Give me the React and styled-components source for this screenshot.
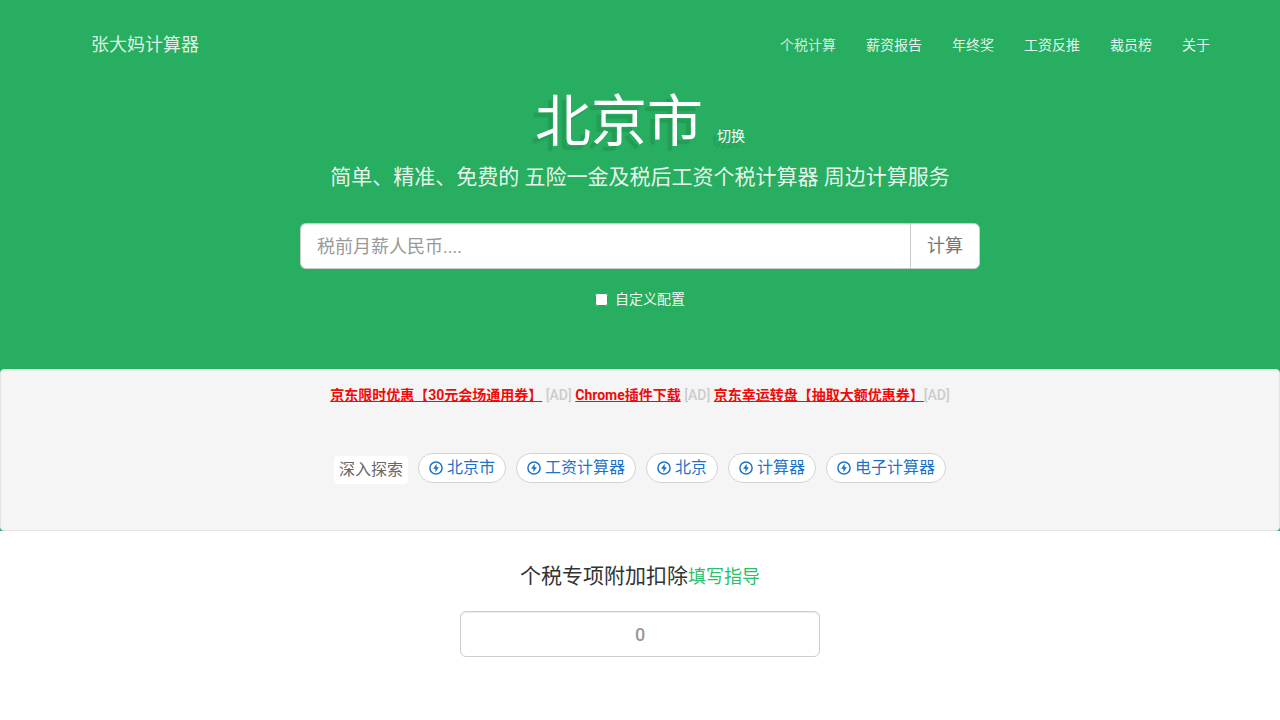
import React, { useState } from 'react';
import styled, { createGlobalStyle, css } from 'styled-components';

const GlobalStyle = createGlobalStyle`
  *, *::before, *::after {
    box-sizing: border-box;
  }

  body {
    margin: 0;
    background: #fff;
    color: #333;
    font-family: Roboto, 'Noto Sans CJK SC', sans-serif;
    font-size: 14px;
    font-weight: 400;
    line-height: 20px;
  }

  a {
    text-decoration: none;
  }

  input, button {
    font-family: inherit;
  }
`;

const Green = styled.div`
  background: #27ae60;
`;

const Nav = styled.nav`
  display: flex;
  align-items: center;
  justify-content: space-between;
  max-width: 1170px;
  height: 90px;
  margin: 0 auto;
  padding: 0 15px 0 36px;
`;

const Brand = styled.a`
  color: rgba(255, 255, 255, 0.85);
  font-size: 18px;
`;

const Menu = styled.ul`
  display: flex;
  gap: 30px;
  margin: 0;
  padding: 0;
  list-style: none;
`;

const MenuLink = styled.a`
  color: ${props => (props.$active ? 'rgba(255, 255, 255, 0.8)' : 'rgba(255, 255, 255, 0.9)')};
`;

const Hero = styled.header`
  display: flex;
  flex-direction: column;
  align-items: center;
  padding-bottom: 60px;
  color: #fff;
`;

const City = styled.h1`
  margin: 0;
  font-size: 56px;
  font-weight: 400;
  line-height: 64px;
  text-shadow: -5px 5px 1px rgba(0, 0, 0, 0.1);
`;

const Switch = styled.a`
  color: #fff;
  font-size: 14px;
  line-height: 20px;
`;

const Lead = styled.p`
  margin: 8px 0 30px;
  color: rgba(255, 255, 255, 0.9);
  font-size: 21px;
  line-height: 31px;
`;

const Form = styled.form`
  display: flex;
  flex-direction: column;
  align-items: center;
  gap: 20px;
  width: 100%;
  max-width: 680px;
`;

const InputGroup = styled.div`
  display: flex;
  width: 100%;
`;

const fieldCss = css`
  height: 46px;
  padding: 0 16px;
  border: 1px solid #ccc;
  background: #fff;
  font-size: 18px;
  line-height: 24px;
`;

const Field = styled.input`
  ${fieldCss}
  flex: 1;
  min-width: 0;
  border-right: 0;
  border-radius: 6px 0 0 6px;
  box-shadow: inset 0 1px 1px rgba(0, 0, 0, 0.075);
  color: #555;

  &::placeholder {
    color: #999;
  }
`;

const Submit = styled.button`
  ${fieldCss}
  border-radius: 0 6px 6px 0;
  color: #777;
  cursor: pointer;
`;

const Custom = styled.label`
  display: flex;
  align-items: center;
  gap: 7px;
  color: rgba(255, 255, 255, 0.95);
`;

const Check = styled.input`
  width: 13px;
  height: 13px;
  margin: 0;
`;

const Well = styled.section`
  display: flex;
  flex-direction: column;
  align-items: center;
  gap: 48px;
  min-height: 162px;
  padding: 15px;
  border: 1px solid #e3e3e3;
  border-radius: 4px;
  background: #f5f5f5;
  box-shadow: inset 0 1px 1px rgba(0, 0, 0, 0.05);
`;

const Ads = styled.p`
  margin: 0;
  color: #ccc;
  font-weight: 500;
`;

const AdLink = styled.a`
  color: #f00a0a;
  font-weight: 700;
  text-decoration: underline;
`;

const Tags = styled.div`
  display: flex;
  flex-wrap: wrap;
  align-items: flex-start;
  justify-content: center;
  gap: 10px;
  font-size: 16px;
`;

const TagsTitle = styled.span`
  margin-top: 3px;
  padding: 0 5px;
  border-radius: 4px;
  background: #fff;
  color: #666;
  line-height: 28px;
`;

const Tag = styled.a`
  display: flex;
  align-items: center;
  gap: 4px;
  height: 30px;
  padding: 0 10px;
  border: 1px solid #d3d3d3;
  border-radius: 15px;
  background: #fff;
  color: #1f72c8;
`;

const Deduction = styled.section`
  display: flex;
  flex-direction: column;
  align-items: center;
  gap: 20px;
  padding: 30px 15px;
`;

const DeductionTitle = styled.h2`
  margin: 0;
  font-size: 21px;
  font-weight: 400;
  line-height: 30px;
`;

const Guide = styled.a`
  color: #2dbe6c;
  font-size: 18px;
  line-height: 20px;
`;

const Amount = styled.input`
  ${fieldCss}
  width: 100%;
  max-width: 360px;
  border-radius: 6px;
  box-shadow: inset 0 1px 1px rgba(0, 0, 0, 0.075);
  color: #555;
  font-weight: 500;
  text-align: center;

  &::placeholder {
    color: #999;
  }
`;

const menu = ['个税计算', '薪资报告', '年终奖', '工资反推', '裁员榜', '关于'];
const tags = ['北京市', '工资计算器', '北京', '计算器', '电子计算器'];

const BoltIcon = () => (
  <svg width="14" height="14" viewBox="0 0 14 14" aria-hidden="true">
    <circle cx="7" cy="7" r="6.1" fill="none" stroke="currentColor" strokeWidth="1.5" />
    <path d="M7.7 2.7 4.1 7.8h2.3v3.5l3.5-5.1H7.7z" fill="currentColor" />
  </svg>
);

function App() {
  const [salary, setSalary] = useState('');
  const [amount, setAmount] = useState('');

  return (
    <>
      <GlobalStyle />
      <Green>
        <Nav>
          <Brand href="#">张大妈计算器</Brand>
          <Menu>
            {menu.map((item, i) => (
              <li key={item}>
                <MenuLink href="#" $active={i === 0}>{item}</MenuLink>
              </li>
            ))}
          </Menu>
        </Nav>
        <Hero>
          <City>
            北京市 <Switch href="#">切换</Switch>
          </City>
          <Lead>简单、精准、免费的 五险一金及税后工资个税计算器 周边计算服务</Lead>
          <Form onSubmit={e => e.preventDefault()}>
            <InputGroup>
              <Field
                aria-label="税前月薪"
                placeholder="税前月薪人民币...."
                value={salary}
                onChange={e => setSalary(e.target.value)}
              />
              <Submit type="submit">计算</Submit>
            </InputGroup>
            <Custom>
              <Check type="checkbox" />
              自定义配置
            </Custom>
          </Form>
        </Hero>
        <Well>
          <Ads>
            <AdLink href="#">京东限时优惠【30元会场通用券】</AdLink> [AD]{' '}
            <AdLink href="#">Chrome插件下载</AdLink> [AD]{' '}
            <AdLink href="#">京东幸运转盘【抽取大额优惠券】</AdLink>[AD]
          </Ads>
          <Tags>
            <TagsTitle>深入探索</TagsTitle>
            {tags.map(tag => (
              <Tag href="#" key={tag}>
                <BoltIcon />
                {tag}
              </Tag>
            ))}
          </Tags>
        </Well>
      </Green>
      <Deduction>
        <DeductionTitle>
          个税专项附加扣除<Guide href="#">填写指导</Guide>
        </DeductionTitle>
        <Amount
          aria-label="个税专项附加扣除"
          placeholder="0"
          value={amount}
          onChange={e => setAmount(e.target.value)}
        />
      </Deduction>
    </>
  );
}

export default App;
